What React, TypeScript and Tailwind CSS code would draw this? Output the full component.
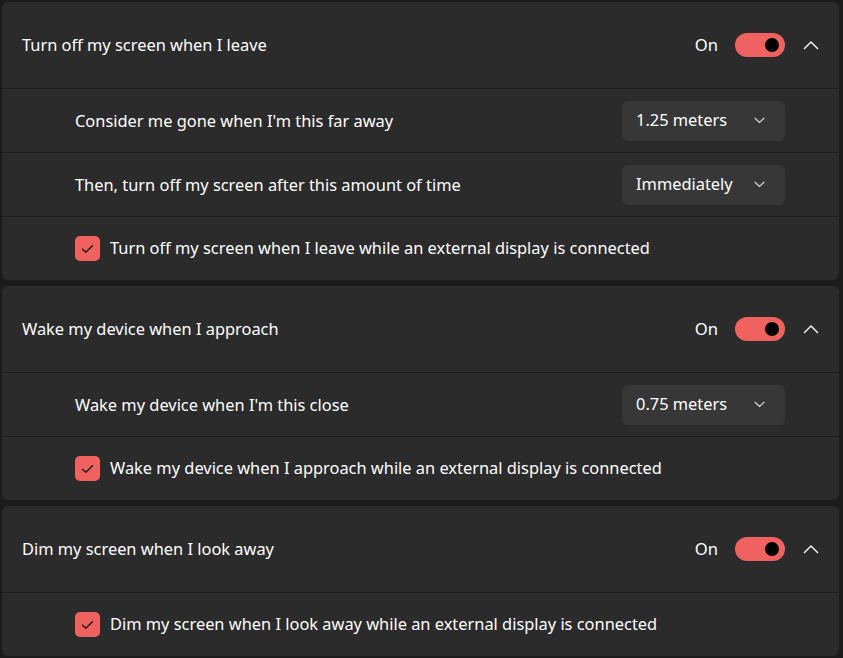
import React from "react";

function ChevronUp() {
    return (
        <svg width="16" height="10" viewBox="0 0 16 10" fill="none">
            <path d="M1.5 8.5 L8 2 L14.5 8.5" stroke="#ffffff" strokeWidth="1.4" strokeLinecap="round" strokeLinejoin="round" />
        </svg>
    );
}

function ChevronDown() {
    return (
        <svg width="11" height="7" viewBox="0 0 11 7" fill="none">
            <path d="M1 1.2 L5.5 5.5 L10 1.2" stroke="#d0d0d0" strokeWidth="1.2" strokeLinecap="round" strokeLinejoin="round" />
        </svg>
    );
}

function Toggle() {
    return (
        <div className="flex h-[24px] w-[50px] items-center justify-end rounded-full bg-[#f0625f] pr-[6px]">
            <div className="h-[14px] w-[14px] rounded-full bg-black" />
        </div>
    );
}

function Check() {
    return (
        <div className="flex h-[25px] w-[25px] items-center justify-center rounded-[5px] bg-[#f0625f]">
            <svg width="13" height="10" viewBox="0 0 13 10" fill="none">
                <path d="M1.5 5.2 L4.8 8.3 L11.5 1.7" stroke="#1a1a1a" strokeWidth="1.4" strokeLinecap="round" strokeLinejoin="round" />
            </svg>
        </div>
    );
}

function Dropdown({ label }: { label: string }) {
    return (
        <div className="flex h-[40px] w-[163px] items-center justify-between rounded-[6px] bg-[#373737] pl-[14px] pr-[20px]">
            <span className="text-[16.4px] text-white">{label}</span>
            <ChevronDown />
        </div>
    );
}

function Header({ title }: { title: string }) {
    return (
        <div className="flex h-[86px] items-center bg-[#2b2b2b] pl-[20px] pr-[20px]">
            <span className="flex-1 pt-[1px] text-[16.4px] text-white">{title}</span>
            <span className="mr-[17px] pt-[1px] text-[16.6px] text-white">On</span>
            <Toggle />
            <div className="ml-[18px] flex w-[16px] items-center">
                <ChevronUp />
            </div>
        </div>
    );
}

function SelectRow({ label, value }: { label: string; value: string }) {
    return (
        <div className="flex h-[64px] items-center border-t border-[#1d1d1d] bg-[#2b2b2b] pl-[73px] pr-[54px]">
            <span className="flex-1 pt-[1px] text-[16.4px] text-white">{label}</span>
            <Dropdown label={value} />
        </div>
    );
}

function CheckRow({ label }: { label: string }) {
    return (
        <div className="flex h-[64px] items-center gap-[10px] border-t border-[#1d1d1d] bg-[#2b2b2b] pl-[73px]">
            <Check />
            <span className="text-[16.4px] text-white">{label}</span>
        </div>
    );
}

export default function App() {
    return (
        <div
            className="flex h-[658px] w-[843px] flex-col gap-[6px] overflow-hidden bg-[#1c1c1c] pl-[2px] pr-[4px] pt-[2px]"
            style={{ fontFamily: '"Noto Sans", "Open Sans", sans-serif' }}
        >
            <div className="shrink-0 overflow-hidden rounded-[6px]">
                <Header title="Turn off my screen when I leave" />
                <SelectRow label="Consider me gone when I'm this far away" value="1.25 meters" />
                <SelectRow label="Then, turn off my screen after this amount of time" value="Immediately" />
                <CheckRow label="Turn off my screen when I leave while an external display is connected" />
            </div>
            <div className="shrink-0 overflow-hidden rounded-[6px]">
                <Header title="Wake my device when I approach" />
                <SelectRow label="Wake my device when I'm this close" value="0.75 meters" />
                <CheckRow label="Wake my device when I approach while an external display is connected" />
            </div>
            <div className="shrink-0 overflow-hidden rounded-[6px]">
                <Header title="Dim my screen when I look away" />
                <CheckRow label="Dim my screen when I look away while an external display is connected" />
            </div>
        </div>
    );
}
